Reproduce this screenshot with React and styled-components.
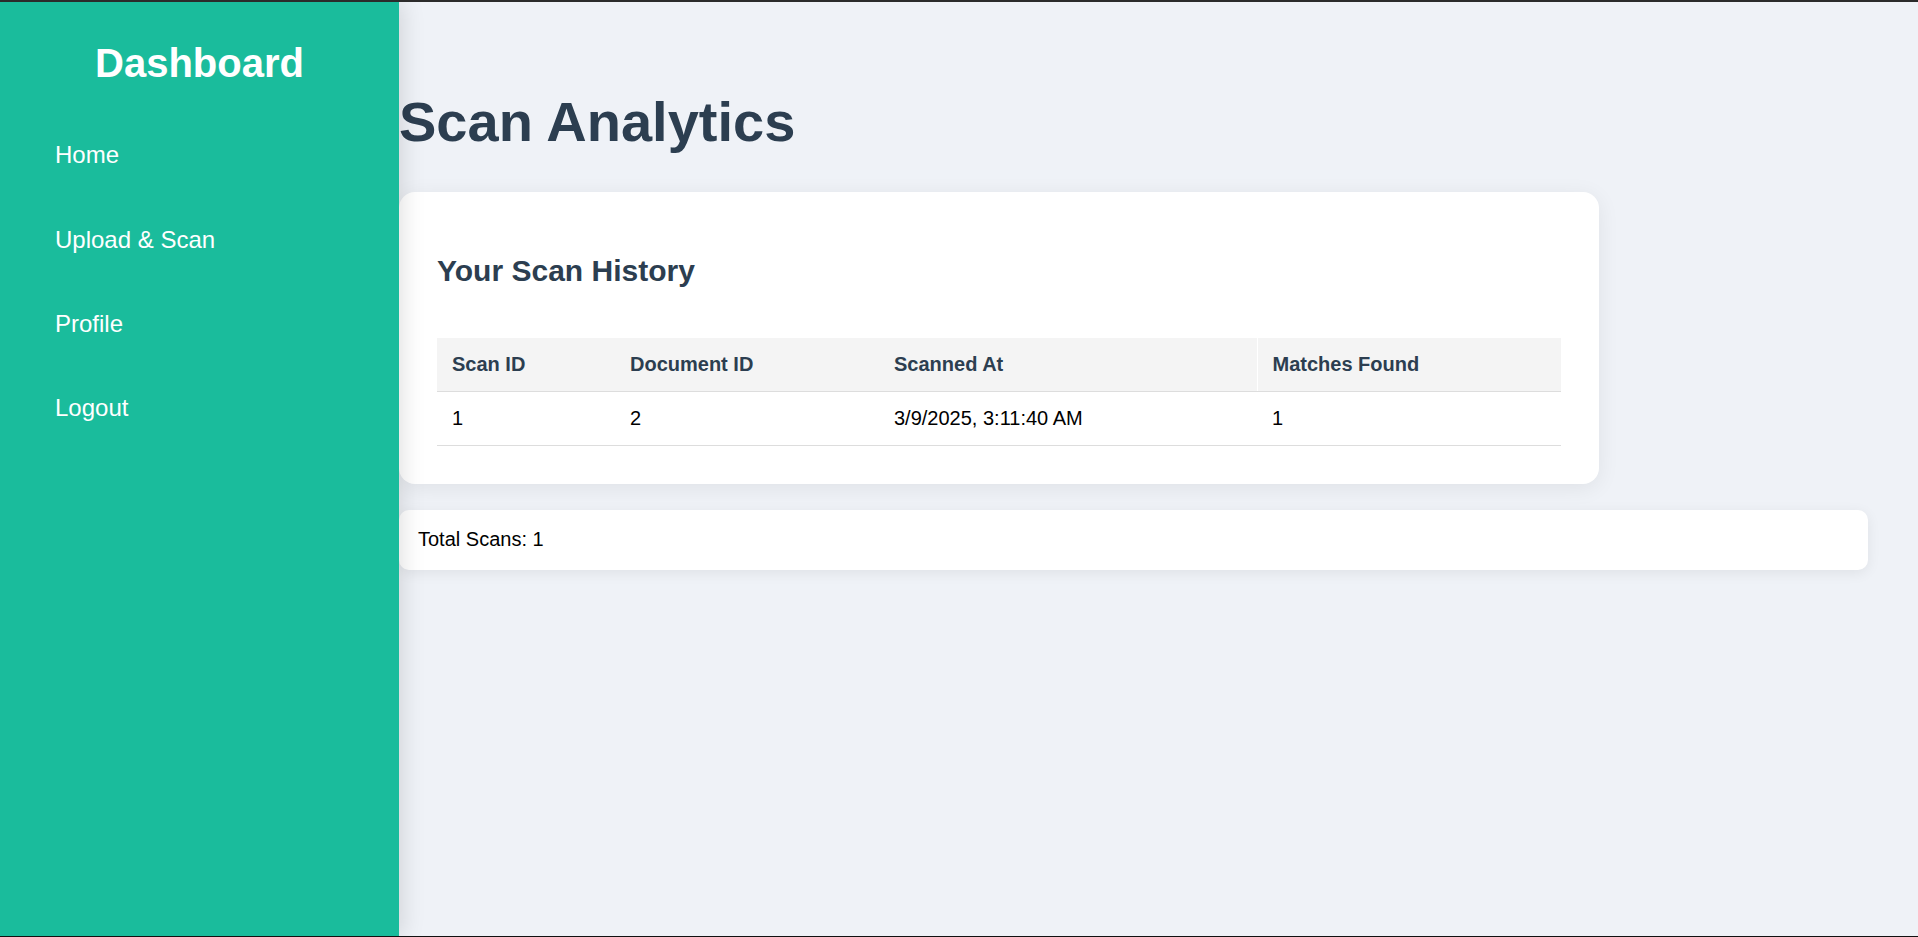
import React from 'react';
import styled, { createGlobalStyle } from 'styled-components';

const colors = {
  sidebar: '#1abc9c',
  background: '#eff2f7',
  heading: '#2c3e50',
  text: '#000000',
  headerCell: '#f4f4f4',
  border: '#dddddd',
};

const GlobalStyle = createGlobalStyle`
  * { box-sizing: border-box; }
  html, body {
    margin: 0;
    padding: 0;
    font-family: "Liberation Sans", Arial, sans-serif;
    background: ${colors.background};
  }
`;

const Page = styled.div`
  display: flex;
  height: 100vh;
  border-top: 2px solid #2b2b2b;
  border-bottom: 1px solid #111;
  background: ${colors.background};
  overflow: hidden;
`;

const Sidebar = styled.aside`
  position: relative;
  z-index: 2;
  flex: 0 0 399px;
  background: ${colors.sidebar};
  padding-top: 37.5px;
  box-shadow: 3px 0 22px rgba(0, 0, 0, 0.13);
`;

const Brand = styled.h2`
  margin: 0 0 27.5px;
  color: #fff;
  text-align: center;
  font-size: 40px;
  line-height: 46px;
  font-weight: bold;
`;

const NavLink = styled.a`
  display: block;
  padding: 28.2px 0 28.2px 55px;
  color: #fff;
  font-size: 24px;
  line-height: 28px;
  text-decoration: none;
  cursor: pointer;
`;

const Main = styled.main`
  flex: 1;
  padding: 50px 50px 0 0;
`;

const Title = styled.h1`
  margin: 38px 0 38px;
  color: ${colors.heading};
  font-size: 56px;
  line-height: 64px;
  font-weight: bold;
`;

const Card = styled.section`
  width: 1200px;
  background: #fff;
  border-radius: 16px;
  padding: 37.5px 38px 38px;
  box-shadow: 0 4px 22px rgba(0, 0, 0, 0.07);
`;

const CardTitle = styled.h2`
  margin: 24px 0 50px;
  color: ${colors.heading};
  font-size: 30px;
  line-height: 34px;
  font-weight: bold;
`;

const Table = styled.table`
  width: 100%;
  table-layout: fixed;
  border-collapse: collapse;
  font-size: 20px;
  line-height: 23px;
`;

const Th = styled.th`
  width: ${p => p.$w}px;
  padding: 15px;
  text-align: left;
  background: ${colors.headerCell};
  color: ${colors.heading};
  font-weight: bold;
  border-bottom: 1px solid ${colors.border};
  border-left: ${p => (p.$split ? '1px solid #fff' : 'none')};
`;

const Td = styled.td`
  padding: 15px;
  color: ${colors.text};
  border-bottom: 1px solid ${colors.border};
`;

const Summary = styled.div`
  margin-top: 26px;
  background: #fff;
  border-radius: 10px;
  padding: 18.5px 19px;
  font-size: 20px;
  line-height: 23px;
  color: ${colors.text};
  box-shadow: 0 3px 14px rgba(0, 0, 0, 0.07);
`;

const navItems = ['Home', 'Upload & Scan', 'Profile', 'Logout'];

const columns = [
  { label: 'Scan ID', w: 178 },
  { label: 'Document ID', w: 264 },
  { label: 'Scanned At', w: 378 },
  { label: 'Matches Found', w: 304, split: true },
];

const scans = [
  { id: 1, documentId: 2, scannedAt: '3/9/2025, 3:11:40 AM', matches: 1 },
];

export default function App() {
  return (
    <>
      <GlobalStyle />
      <Page>
        <Sidebar>
          <Brand>Dashboard</Brand>
          <nav>
            {navItems.map(item => (
              <NavLink key={item}>{item}</NavLink>
            ))}
          </nav>
        </Sidebar>
        <Main>
          <Title>Scan Analytics</Title>
          <Card>
            <CardTitle>Your Scan History</CardTitle>
            <Table>
              <thead>
                <tr>
                  {columns.map(col => (
                    <Th key={col.label} $w={col.w} $split={col.split}>
                      {col.label}
                    </Th>
                  ))}
                </tr>
              </thead>
              <tbody>
                {scans.map(scan => (
                  <tr key={scan.id}>
                    <Td>{scan.id}</Td>
                    <Td>{scan.documentId}</Td>
                    <Td>{scan.scannedAt}</Td>
                    <Td>{scan.matches}</Td>
                  </tr>
                ))}
              </tbody>
            </Table>
          </Card>
          <Summary>Total Scans: {scans.length}</Summary>
        </Main>
      </Page>
    </>
  );
}
